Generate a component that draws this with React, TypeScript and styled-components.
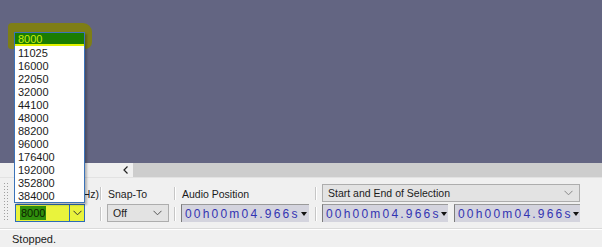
import React from 'react'
import styled, { createGlobalStyle } from 'styled-components'

const GlobalStyle = createGlobalStyle`
  html, body {
    margin: 0;
    padding: 0;
  }
  body {
    width: 602px;
    height: 247px;
    overflow: hidden;
    font-family: 'Liberation Sans', Arial, sans-serif;
    font-size: 11px;
    color: #1b1b1b;
  }
`

const Window = styled.div`
  position: relative;
  width: 602px;
  height: 247px;
  display: flex;
  flex-direction: column;
  background: #f0f0f0;
`

const TrackArea = styled.div`
  height: 163px;
  background: #636582;
`

const ScrollRow = styled.div`
  height: 14px;
  display: flex;
  background: #f0f0f0;
  border-bottom: 1px solid #e2e2e2;
`

const ScrollArrow = styled.div`
  width: 15px;
  margin-left: 118px;
  display: flex;
  align-items: center;
  justify-content: center;
`

const ScrollTrack = styled.div`
  flex: 1;
  background: #cdcdcd;
`

const Toolbar = styled.div`
  height: 51px;
  display: flex;
  align-items: flex-start;
  padding: 6px 0 0 3px;
  box-sizing: border-box;
  border-bottom: 1px solid #dadada;
`

const Grip = styled.div`
  width: 6px;
  height: 40px;
  margin-top: -2px;
  background-image: radial-gradient(circle, #a0a0a0 0.8px, transparent 1px);
  background-size: 3px 3px;
`

const Group = styled.div<{ $width: number; $gap: number }>`
  width: ${(p) => p.$width}px;
  margin-left: ${(p) => p.$gap}px;
  display: grid;
  grid-template-rows: 17px 18px;
  row-gap: 3px;
`

const Label = styled.div<{ $right?: boolean }>`
  font-size: 10.5px;
  line-height: 17px;
  padding: 2px 0 0 1px;
  box-sizing: border-box;
  white-space: nowrap;
  overflow: hidden;
  text-align: ${(p) => (p.$right ? 'right' : 'left')};
`

const Sep = styled.div<{ $gap: number }>`
  width: 2px;
  margin-left: ${(p) => p.$gap}px;
  display: grid;
  grid-template-rows: 17px 18px;
  row-gap: 3px;
`

const SepBar = styled.div`
  margin: 3px 0 1px;
  border-left: 1px solid #c6c6c6;
  border-right: 1px solid #ffffff;
`

const Select = styled.div`
  height: 18px;
  box-sizing: border-box;
  border: 1px solid #adadad;
  background: #e3e3e3;
  display: flex;
  align-items: center;
  justify-content: space-between;
  padding: 0 6px 0 5px;
  font-size: 10.5px;
`

const RateCombo = styled.div`
  width: 70px;
  height: 18px;
  box-sizing: border-box;
  border: 1px solid #2d6cb6;
  background: #e9f33c;
  display: flex;
`

const RateText = styled.div`
  flex: 1;
  padding: 1px 0 0 4px;
`

const Picked = styled.span`
  display: inline-block;
  background: #2f8f0c;
  color: #0d1f00;
  line-height: 14px;
  padding: 0 1px;
`

const RateButton = styled.div`
  width: 14px;
  border-left: 1px solid #2d6cb6;
  display: flex;
  align-items: center;
  justify-content: center;
`

const TimeRow = styled.div`
  display: flex;
  gap: 6px;
`

const Time = styled.div<{ $width: number }>`
  width: ${(p) => p.$width}px;
  height: 18px;
  box-sizing: border-box;
  background: #d4d4de;
  border-left: 1px solid #7c7c7c;
  border-top: 1px solid #9a9a9a;
  display: flex;
  align-items: center;
  padding-left: 3px;
`

const Digits = styled.span`
  flex: 1;
  font-size: 12px;
  letter-spacing: 2.2px;
  color: #3333b2;
  white-space: nowrap;
`

const Drop = styled.span`
  width: 6px;
  margin-right: 2px;
  border-left: 3px solid transparent;
  border-right: 3px solid transparent;
  border-top: 4px solid #111;
  box-sizing: border-box;
  height: 4px;
`

const StatusBar = styled.div`
  flex: 1;
  display: flex;
  align-items: center;
  padding-left: 12px;
  border-top: 1px solid #ffffff;
`

const Highlighter = styled.div`
  position: absolute;
  left: 8px;
  top: 23px;
  width: 84px;
  height: 26px;
  background: #7e7e16;
  border-radius: 4px 9px 7px 3px;
  filter: blur(0.6px);
`

const Popup = styled.div`
  position: absolute;
  left: 14px;
  top: 32px;
  width: 71px;
  box-sizing: border-box;
  border: 1px solid #3b73b9;
  background: #ffffff;
  box-shadow: 2px 2px 2px rgba(0, 0, 0, 0.25);
`

const Option = styled.div<{ $active?: boolean }>`
  height: 13px;
  box-sizing: border-box;
  line-height: ${(p) => (p.$active ? 12 : 14)}px;
  padding-left: 3px;
  background: ${(p) => (p.$active ? '#1a7d02' : 'transparent')};
  color: ${(p) => (p.$active ? '#c6ee10' : '#1b1b1b')};
  border-bottom: ${(p) => (p.$active ? '2px solid #e2f200' : 'none')};
`

const Chevron = ({ color = '#555' }: { color?: string }) => (
  <svg width='9' height='6' viewBox='0 0 9 6'>
    <polyline points='0.5,0.8 4.5,4.8 8.5,0.8' fill='none' stroke={color} strokeWidth='1' />
  </svg>
)

const rates = ['8000', '11025', '16000', '22050', '32000', '44100', '48000', '88200', '96000', '176400', '192000', '352800', '384000']

function TimeBox({ width }: { width: number }) {
  return (
    <Time $width={width}>
      <Digits>00h00m04.966s</Digits>
      <Drop />
    </Time>
  )
}

function Separator({ gap }: { gap: number }) {
  return (
    <Sep $gap={gap}>
      <SepBar />
      <SepBar />
    </Sep>
  )
}

export default function App() {
  return (
    <Window>
      <GlobalStyle />
      <TrackArea />
      <ScrollRow>
        <ScrollArrow>
          <svg width='5' height='8' viewBox='0 0 5 8'>
            <polyline points='4.5,0.5 1,4 4.5,7.5' fill='none' stroke='#222' strokeWidth='1.2' />
          </svg>
        </ScrollArrow>
        <ScrollTrack />
      </ScrollRow>
      <Toolbar>
        <Grip />
        <Group $width={84} $gap={6}>
          <Label $right>Project Rate (Hz)</Label>
          <RateCombo>
            <RateText>
              <Picked>8000</Picked>
            </RateText>
            <RateButton>
              <Chevron color='#333' />
            </RateButton>
          </RateCombo>
        </Group>
        <Separator gap={1} />
        <Group $width={62} $gap={5}>
          <Label>Snap-To</Label>
          <Select>
            <span>Off</span>
            <Chevron />
          </Select>
        </Group>
        <Separator gap={5} />
        <Group $width={128} $gap={5}>
          <Label>Audio Position</Label>
          <TimeBox width={128} />
        </Group>
        <Separator gap={6} />
        <Group $width={258} $gap={5}>
          <Select>
            <span>Start and End of Selection</span>
            <Chevron color='#888' />
          </Select>
          <TimeRow>
            <TimeBox width={126} />
            <TimeBox width={126} />
          </TimeRow>
        </Group>
      </Toolbar>
      <StatusBar>Stopped.</StatusBar>
      <Highlighter />
      <Popup>
        {rates.map((r, i) => (
          <Option key={r} $active={i === 0}>
            {r}
          </Option>
        ))}
      </Popup>
    </Window>
  )
}
